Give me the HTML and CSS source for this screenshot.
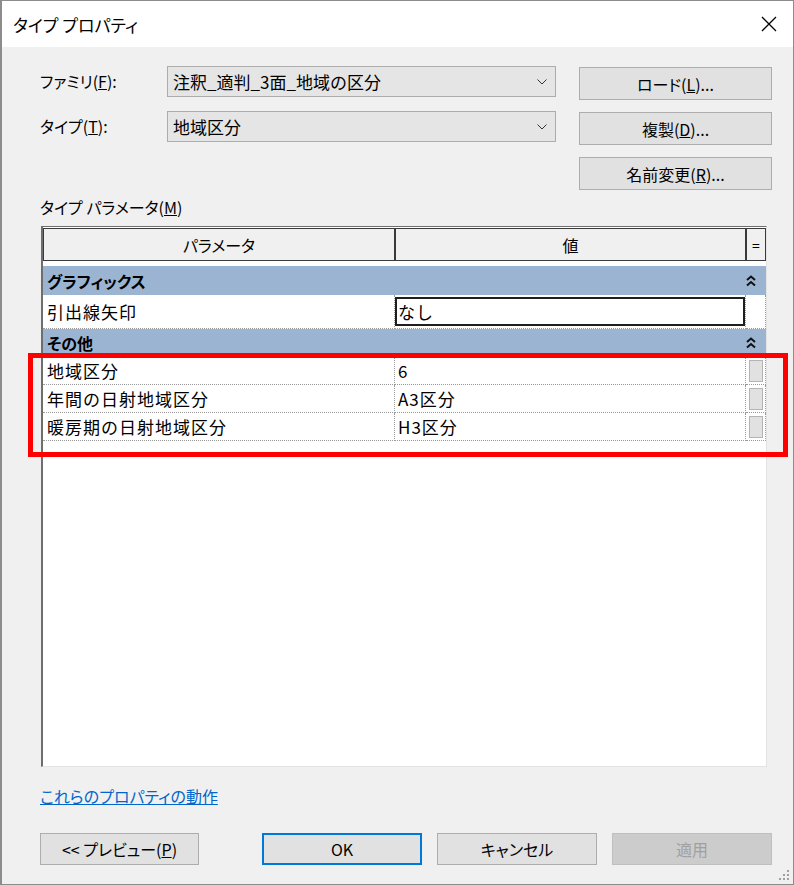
FILE: index.html
```html
<!DOCTYPE html>
<html>
<head>
    <title>タイプ プロパティ</title>
    <meta charset="utf-8">
    <link rel="stylesheet" href="styles.css">
</head>
<body>
    <div class="dialog">
        <div class="titlebar">
            <span class="title">タイプ プロパティ</span>
            <svg class="close" width="16" height="16" viewBox="0 0 16 16">
                <path d="M1 1 L15 15 M15 1 L1 15" stroke="#000" stroke-width="1.3" fill="none"/>
            </svg>
        </div>

        <div class="content">
            <!-- ファミリ / タイプ -->
            <div class="top-form">
                <label>ファミリ(<u>F</u>):</label>
                <div class="combo">
                    <span>注釈_適判_3面_地域の区分</span>
                    <svg width="10" height="6" viewBox="0 0 10 6"><path d="M0.5 0.5 L5 5 L9.5 0.5" stroke="#333" fill="none"/></svg>
                </div>
                <button class="btn">ロード(<u>L</u>)...</button>

                <label>タイプ(<u>T</u>):</label>
                <div class="combo">
                    <span>地域区分</span>
                    <svg width="10" height="6" viewBox="0 0 10 6"><path d="M0.5 0.5 L5 5 L9.5 0.5" stroke="#333" fill="none"/></svg>
                </div>
                <button class="btn">複製(<u>D</u>)...</button>

                <span></span>
                <span></span>
                <button class="btn">名前変更(<u>R</u>)...</button>
            </div>

            <div class="section-label">タイプ パラメータ(<u>M</u>)</div>

            <!-- プロパティ グリッド -->
            <div class="prop-grid">
                <div class="grid-head">
                    <div class="head-cell">パラメータ</div>
                    <div class="head-cell">値</div>
                    <div class="head-cell eq">=</div>
                </div>

                <div class="group">
                    <span>グラフィックス</span>
                    <svg width="10" height="12" viewBox="0 0 10 12"><path d="M1 5 L5 1.5 L9 5 M1 10.5 L5 7 L9 10.5" stroke="#111" stroke-width="2" fill="none"/></svg>
                </div>
                <div class="prop-row tall">
                    <div class="cell name">引出線矢印</div>
                    <div class="cell value"><div class="edit-box">なし</div></div>
                    <div class="cell side"></div>
                </div>

                <div class="group second">
                    <span>その他</span>
                    <svg width="10" height="12" viewBox="0 0 10 12"><path d="M1 5 L5 1.5 L9 5 M1 10.5 L5 7 L9 10.5" stroke="#111" stroke-width="2" fill="none"/></svg>
                </div>
                <div class="prop-row">
                    <div class="cell name">地域区分</div>
                    <div class="cell value">6</div>
                    <div class="cell side"><div class="mini-btn"></div></div>
                </div>
                <div class="prop-row">
                    <div class="cell name">年間の日射地域区分</div>
                    <div class="cell value">A3区分</div>
                    <div class="cell side"><div class="mini-btn"></div></div>
                </div>
                <div class="prop-row">
                    <div class="cell name">暖房期の日射地域区分</div>
                    <div class="cell value">H3区分</div>
                    <div class="cell side"><div class="mini-btn"></div></div>
                </div>
            </div>

            <a class="help-link" href="#">これらのプロパティの動作</a>

            <div class="footer">
                <button class="btn preview">&lt;&lt; プレビュー(<u>P</u>)</button>
                <div class="footer-right">
                    <button class="btn ok">OK</button>
                    <button class="btn">キャンセル</button>
                    <button class="btn disabled">適用</button>
                </div>
            </div>
        </div>

        <!-- 赤枠 注記 -->
        <div class="annot"></div>

        <svg class="grip" width="12" height="12" viewBox="0 0 12 12">
            <g fill="#a0a0a0">
                <rect x="9" y="1" width="2" height="2"/>
                <rect x="9" y="5" width="2" height="2"/>
                <rect x="5" y="5" width="2" height="2"/>
                <rect x="9" y="9" width="2" height="2"/>
                <rect x="5" y="9" width="2" height="2"/>
                <rect x="1" y="9" width="2" height="2"/>
            </g>
        </svg>
    </div>
</body>
</html>
```

FILE: styles.css
```css
body {
    margin: 0;
    font-family: "Noto Sans CJK JP", "Noto Sans", sans-serif;
    color: #000;
}

.dialog {
    position: relative;
    width: 794px;
    height: 885px;
    box-sizing: border-box;
    border: 1px solid #8c8c8c;
    border-left-width: 2px;
    background-color: #f0f0f0;
    display: flex;
    flex-direction: column;
}

.titlebar {
    height: 46px;
    background-color: #fff;
    display: flex;
    align-items: center;
    justify-content: space-between;
    padding: 0 16px 0 11px;
}

.title {
    font-size: 17px;
    font-feature-settings: "palt";
}

.content {
    flex: 1;
    padding: 20px 21px 0 38px;
    display: flex;
    flex-direction: column;
    align-items: flex-start;
}

.top-form {
    display: grid;
    grid-template-columns: 104px 389px 193px;
    grid-template-rows: repeat(3, 33px);
    column-gap: 23px;
    row-gap: 12px;
    align-items: center;
}

.top-form label {
    font-size: 16px;
    font-feature-settings: "palt";
    align-self: start;
    line-height: 28px;
}

.combo {
    height: 31px;
    align-self: start;
    margin-top: -1px;
    box-sizing: border-box;
    border: 1px solid #acacac;
    background-color: #e5e5e5;
    display: flex;
    align-items: center;
    justify-content: space-between;
    padding: 0 8px 0 5px;
    font-size: 17px;
}

.btn {
    height: 33px;
    box-sizing: border-box;
    border: 1px solid #adadad;
    background-color: #e1e1e1;
    font-family: inherit;
    font-size: 16px;
    font-feature-settings: "palt";
    color: #000;
    padding: 0;
    display: flex;
    align-items: center;
    justify-content: center;
}

.section-label {
    margin-top: 7px;
    line-height: 20px;
    font-size: 16px;
    font-feature-settings: "palt";
}

.prop-grid {
    margin: 9px 0 0 1px;
    width: 726px;
    height: 541px;
    box-sizing: border-box;
    border-left: 2px solid #6e6e6e;
    border-top: 1px solid #6e6e6e;
    border-right: 1px solid #e3e3e3;
    border-bottom: 1px solid #e3e3e3;
    background-color: #fff;
    padding-top: 1px;
}

.grid-head,
.prop-row {
    display: grid;
    grid-template-columns: 352px 351px 20px;
}

.head-cell {
    height: 33px;
    box-sizing: border-box;
    border: 1px solid #3a3a3a;
    background-color: #f0f0f0;
    display: flex;
    align-items: center;
    justify-content: center;
    font-size: 16px;
    font-feature-settings: "palt";
}

.head-cell.eq {
    font-size: 14px;
}

.group {
    margin-top: 5px;
    height: 29px;
    background-color: #9bb4d1;
    display: flex;
    align-items: center;
    justify-content: space-between;
    padding: 0 10px 0 4px;
    font-size: 16px;
    font-weight: bold;
    font-feature-settings: "palt";
}

.group.second {
    height: 28px;
}

.prop-row {
    height: 28px;
}

.prop-row.tall {
    height: 29px;
}

.cell {
    box-sizing: border-box;
    border-right: 1px dotted #9a9a9a;
    border-bottom: 1px dotted #9a9a9a;
    display: flex;
    align-items: center;
    font-size: 17px;
    letter-spacing: 1px;
    padding-left: 4px;
}

.cell.value {
    padding-left: 3px;
}

.cell.side {
    padding: 0;
    justify-content: center;
}

.prop-row.tall .cell.value {
    padding: 2px 0 2px 0;
}

.edit-box {
    flex: 1;
    height: 100%;
    box-sizing: border-box;
    border: 2px solid #1e1e1e;
    display: flex;
    align-items: center;
    padding-left: 1px;
}

.mini-btn {
    width: 14px;
    height: 22px;
    box-sizing: border-box;
    border: 1px solid #b4b4b4;
    background-color: #e1e1e1;
}

.help-link {
    margin-top: 19px;
    line-height: 20px;
    font-size: 16px;
    font-feature-settings: "palt";
    color: #0066cc;
    text-decoration: underline;
}

.footer {
    margin-top: 27px;
    width: 100%;
    display: flex;
    justify-content: space-between;
}

.footer .btn {
    width: 160px;
    height: 32px;
}

.footer .preview {
    width: 159px;
}

.footer-right {
    display: flex;
    gap: 15px;
}

.btn.ok {
    border: 2px solid #0078d7;
}

.btn.disabled {
    background-color: #cccccc;
    border-color: #bfbfbf;
    color: #a0a0a0;
}

.annot {
    position: absolute;
    left: 26px;
    top: 352px;
    width: 760px;
    height: 104px;
    box-sizing: border-box;
    border: 5px solid #ff0000;
}

.grip {
    position: absolute;
    right: 3px;
    bottom: 3px;
}
```
